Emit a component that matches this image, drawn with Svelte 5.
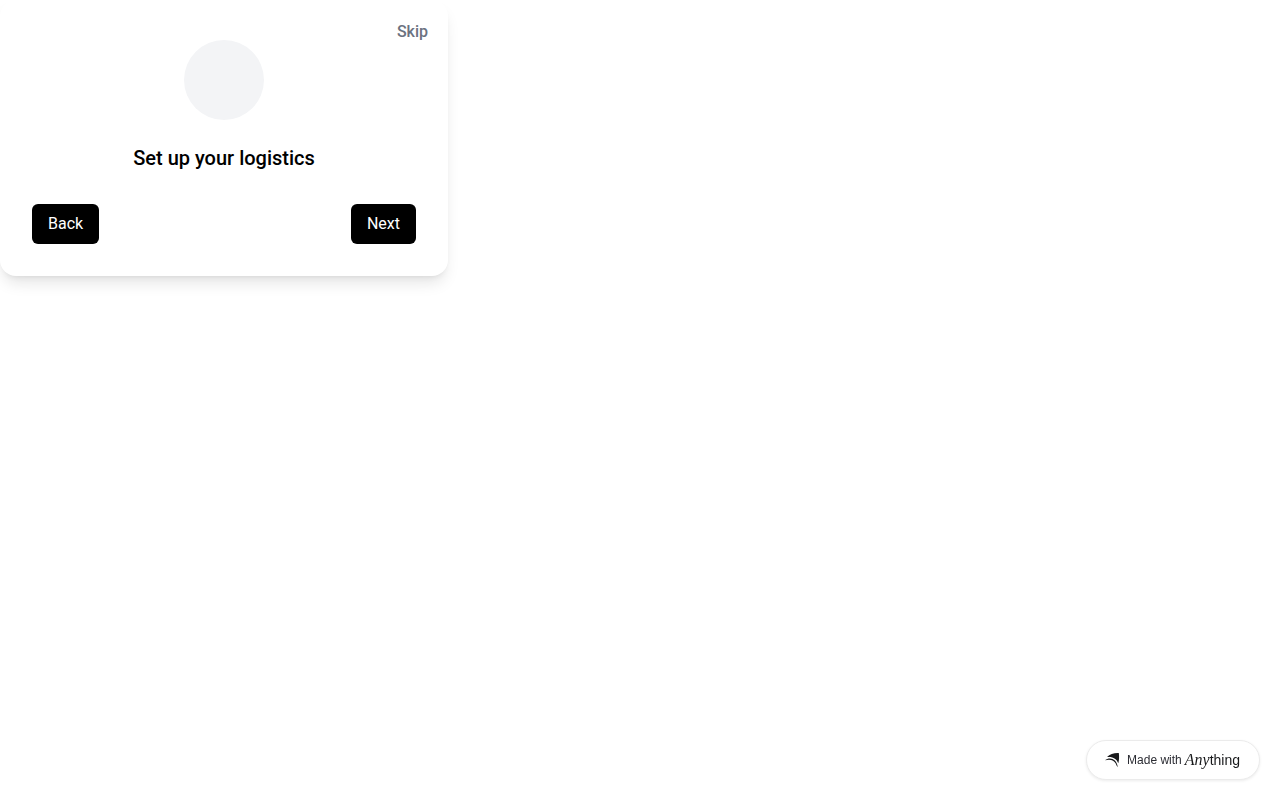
<script>
  const title = 'Set up your logistics';
</script>

<div class="page">
  <main class="card">
    <button class="skip" type="button">Skip</button>
    <div class="avatar"></div>
    <h1>{title}</h1>
    <div class="actions">
      <button class="action" type="button">Back</button>
      <button class="action" type="button">Next</button>
    </div>
  </main>

  <a class="badge" href="#anything">
    <svg width="16" height="16" viewBox="0 0 16 16" fill="#18191b" aria-hidden="true">
      <path d="M3 5C6 2 10 .9 14.8 1.1C15.3 4.6 15.2 8 14.3 11.2C12.6 6.6 8.8 4.3 3 5Z" />
      <path d="M1 8.2C6 4.8 12.6 6.8 13.8 15.2C12.8 14.2 12.2 13 11.7 11.6C10 8 6.2 6.8 1 8.2Z" />
    </svg>
    <span class="made">Made with</span>
    <span class="wordmark"><em>Any</em><span class="thing">thing</span></span>
  </a>
</div>

<style>
  :global(body) {
    background: #fff;
    font-family: Roboto, sans-serif;
  }

  .page {
    min-height: 100vh;
  }

  .card {
    position: relative;
    box-sizing: border-box;
    display: flex;
    flex-direction: column;
    align-items: center;
    width: 100%;
    max-width: 448px;
    padding: 40px 32px 32px;
    border-radius: 16px;
    background: #fff;
    box-shadow: 0 10px 15px -3px rgb(0 0 0 / 0.1), 0 4px 6px -4px rgb(0 0 0 / 0.1);
  }

  button {
    border: 0;
    font-family: inherit;
    font-size: 16px;
    line-height: 24px;
    cursor: pointer;
  }

  .skip {
    position: absolute;
    top: 20px;
    right: 20px;
    padding: 0;
    background: none;
    color: #6b7280;
    font-weight: 500;
  }

  .avatar {
    width: 80px;
    height: 80px;
    border-radius: 50%;
    background: #f3f4f6;
  }

  h1 {
    margin: 24px 0 32px;
    color: #000;
    font-size: 20px;
    line-height: 28px;
    font-weight: 500;
    text-align: center;
  }

  .actions {
    display: flex;
    justify-content: space-between;
    width: 100%;
  }

  .action {
    padding: 8px 16px;
    border-radius: 6px;
    background: #000;
    color: #fff;
  }

  .badge {
    position: fixed;
    right: 20px;
    bottom: 20px;
    box-sizing: border-box;
    display: flex;
    align-items: center;
    height: 40px;
    padding: 0 19px 0 17px;
    border: 1px solid #ebebeb;
    border-radius: 20px;
    background: #fff;
    box-shadow: 0 1px 3px rgb(0 0 0 / 0.08);
    color: #18191b;
    text-decoration: none;
    white-space: nowrap;
  }

  .made {
    margin: 0 3px 0 7px;
    color: #2b2c33;
    font-family: "Liberation Sans", Arial, sans-serif;
    font-size: 12px;
    line-height: 16px;
  }

  .wordmark {
    display: flex;
    align-items: baseline;
    line-height: 20px;
  }

  em {
    font-family: "Liberation Serif", serif;
    font-size: 16px;
  }

  .thing {
    font-family: "Liberation Sans", Arial, sans-serif;
    font-size: 14px;
  }
</style>
